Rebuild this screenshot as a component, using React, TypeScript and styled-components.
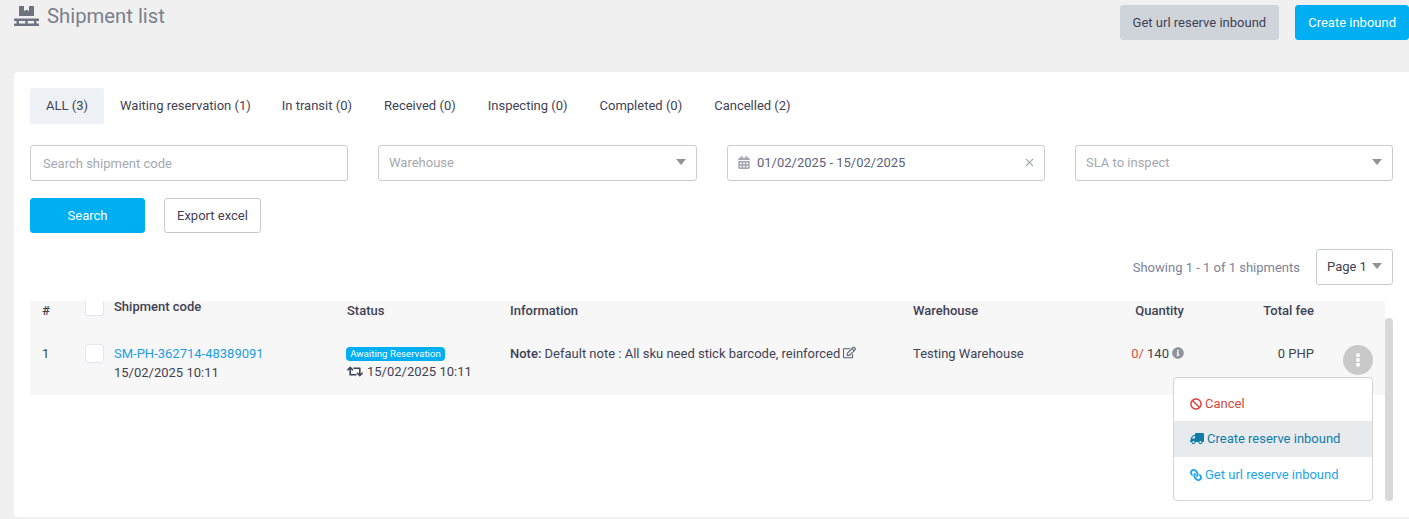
import React from "react"
import styled, { createGlobalStyle } from "styled-components"
import {
  FaBan,
  FaCalendarAlt,
  FaEllipsisV,
  FaInfoCircle,
  FaLink,
  FaPallet,
  FaRegEdit,
  FaRetweet,
  FaTruck,
} from "react-icons/fa"
import { X } from "lucide-react"

const GlobalStyle = createGlobalStyle`
  html, body {
    margin: 0;
    padding: 0;
    background: #f0f0f0;
    overflow: hidden;
  }
  * {
    box-sizing: border-box;
  }
  body {
    font-family: Roboto, "Liberation Sans", sans-serif;
    font-size: 13px;
    color: #3f4254;
  }
`

const Page = styled.div`
  width: 1409px;
  height: 519px;
  padding-left: 14px;
`

const Header = styled.header`
  display: flex;
  justify-content: space-between;
  height: 72px;
  padding-top: 5px;
`

const Title = styled.h1`
  display: flex;
  align-items: flex-start;
  gap: 8px;
  margin: 0;
  font-size: 20.3px;
  font-weight: 400;
  line-height: 22px;
  color: #7b808c;

  svg {
    width: 25px;
    height: 22px;
    color: #6f7380;
  }
`

const HeaderActions = styled.div`
  display: flex;
  gap: 16px;
`

const Button = styled.button<{ $kind: "primary" | "muted" | "outline" }>`
  height: 35px;
  padding: 0 12px;
  border-radius: 3px;
  font-family: inherit;
  font-size: 13px;
  border: 1px solid
    ${p => (p.$kind === "primary" ? "#00aef2" : p.$kind === "muted" ? "#cfd3da" : "#c9c9c9")};
  background: ${p => (p.$kind === "primary" ? "#00aef2" : p.$kind === "muted" ? "#cfd3da" : "#fff")};
  color: ${p => (p.$kind === "primary" ? "#fff" : "#3f4254")};
`

const SearchButton = styled(Button)`
  width: 115px;
`

const Card = styled.main`
  position: relative;
  height: 445px;
  padding: 16px;
  background: #fff;
  border-radius: 4px 0 0 4px;
`

const Tabs = styled.nav`
  display: flex;
  height: 36px;
  margin-bottom: 21px;
`

const Tab = styled.div<{ $active?: boolean }>`
  display: flex;
  align-items: center;
  padding: 0 16px 2px;
  border-radius: 3px;
  background: ${p => (p.$active ? "#eef1f6" : "transparent")};
  color: #3f4254;

  &:nth-child(2) {
    padding-right: 15px;
  }
`

const Filters = styled.div`
  display: grid;
  grid-template-columns: 318px 319px 318px 318px;
  gap: 30px;
  height: 36px;
  margin-bottom: 17px;
`

const Field = styled.div<{ $placeholder?: boolean }>`
  display: flex;
  align-items: center;
  justify-content: space-between;
  padding: 0 10px 2px;
  border: 1px solid #c9ccd2;
  border-radius: 3px;
  background: #fff;
  color: ${p => (p.$placeholder ? "#a5a8b0" : "#5e6278")};
`

const SearchField = styled(Field)`
  padding: 0 12px;
`

const DateValue = styled.span`
  display: flex;
  align-items: center;
  gap: 7px;

  svg {
    color: #a5a8b0;
    width: 12px;
    height: 13px;
  }
`

const Arrow = styled.i`
  width: 0;
  height: 0;
  border-left: 5.5px solid transparent;
  border-right: 5.5px solid transparent;
  border-top: 6px solid #939393;
`

const ClearIcon = styled(X)`
  width: 13px;
  height: 13px;
  color: #a5a8b0;
  margin-right: -2px;
`

const FilterActions = styled.div`
  display: flex;
  gap: 19px;
  height: 35px;
  margin-bottom: 16px;
`

const PagerRow = styled.div`
  display: flex;
  justify-content: flex-end;
  align-items: center;
  gap: 16px;
  height: 36px;
  margin-bottom: 16px;
  color: #7e8299;
`

const PageSelect = styled(Field)`
  width: 77px;
  height: 36px;
  color: #3f4254;
`

const Table = styled.section`
  width: 1355px;
  height: 94px;
  background: #f7f7f7;
`

const Row = styled.div<{ $head?: boolean }>`
  display: grid;
  grid-template-columns: 43px 29px 233px 163px 403px 180px 91px 130px 71px;
  height: ${p => (p.$head ? "34px" : "60px")};
  padding-left: 12px;
  font-weight: ${p => (p.$head ? 500 : 400)};
`

const Cell = styled.div<{ $right?: boolean; $top?: number }>`
  margin-top: ${p => p.$top ?? 0}px;
  line-height: 19px;
  text-align: ${p => (p.$right ? "right" : "left")};
  white-space: nowrap;
`

const Check = styled.span<{ $clip?: boolean }>`
  display: block;
  width: 19px;
  height: ${p => (p.$clip ? "15px" : "19px")};
  background: #fff;
  border: 1px solid #e4e6ef;
  border-top-width: ${p => (p.$clip ? 0 : 1)}px;
  border-radius: ${p => (p.$clip ? "0 0 3px 3px" : "3px")};
`

const CodeLink = styled.a`
  display: block;
  color: #1b9ce5;
`

const Badge = styled.span`
  display: block;
  width: 99px;
  height: 14px;
  margin: 3px 0 0 -1px;
  border-radius: 4px;
  background: #00aef2;
  color: #fff;
  font-size: 9.7px;
  line-height: 14px;
  text-align: center;
`

const StatusDate = styled.span`
  display: flex;
  align-items: center;
  gap: 4px;
  margin-top: 1px;

  svg {
    width: 16px;
    height: 13px;
  }
`

const NoteLabel = styled.b`
  font-weight: 500;
`

const InlineIcon = styled.span`
  margin-left: 3px;
  color: #5e6278;

  svg {
    width: 13px;
    height: 13px;
    vertical-align: -1px;
  }
`

const Received = styled.span`
  color: #e04f44;
`

const InfoIcon = styled(InlineIcon)`
  color: #8f939c;

  svg {
    width: 12px;
    height: 12px;
  }
`

const MenuButton = styled.div`
  display: flex;
  align-items: center;
  justify-content: center;
  width: 30px;
  height: 30px;
  margin: 10px 0 0 29px;
  border-radius: 50%;
  background: #c9c9c9;
  color: #fff;

  svg {
    width: 14px;
    height: 14px;
  }
`

const Scrollbar = styled.div`
  position: absolute;
  left: 1371px;
  top: 246px;
  width: 8px;
  height: 183px;
  border-radius: 4px;
  background: #d8d8d8;
`

const Menu = styled.div`
  position: absolute;
  left: 1159px;
  top: 305px;
  width: 200px;
  height: 124px;
  padding-top: 7px;
  background: #fff;
  border: 1px solid #d4d4d4;
  border-radius: 4px;
`

const MenuItem = styled.div<{ $color: string; $active?: boolean }>`
  display: flex;
  align-items: center;
  gap: 3px;
  height: 36px;
  padding: 0 0 1px 16px;
  background: ${p => (p.$active ? "#e8ebee" : "transparent")};
  color: ${p => p.$color};

  &:first-child {
    padding: 1px 0 0 16px;
  }

  svg {
    width: 12px;
    height: 12px;
  }
`

const FlippedTruck = styled(FaTruck)`
  && {
    width: 14px;
    height: 13px;
  }
  transform: scaleX(-1);
`

const FlippedLink = styled(FaLink)`
  transform: scaleX(-1);
`

const tabs = [
  "ALL (3)",
  "Waiting reservation (1)",
  "In transit (0)",
  "Received (0)",
  "Inspecting (0)",
  "Completed (0)",
  "Cancelled (2)",
]

const App = () => {
  return (
    <Page>
      <GlobalStyle />
      <Header>
        <Title>
          <FaPallet />
          Shipment list
        </Title>
        <HeaderActions>
          <Button $kind="muted">Get url reserve inbound</Button>
          <Button $kind="primary">Create inbound</Button>
        </HeaderActions>
      </Header>

      <Card>
        <Tabs>
          {tabs.map((tab, i) => (
            <Tab key={tab} $active={i === 0}>
              {tab}
            </Tab>
          ))}
        </Tabs>

        <Filters>
          <SearchField $placeholder>Search shipment code</SearchField>
          <Field $placeholder>
            Warehouse
            <Arrow />
          </Field>
          <Field>
            <DateValue>
              <FaCalendarAlt />
              01/02/2025 - 15/02/2025
            </DateValue>
            <ClearIcon />
          </Field>
          <Field $placeholder>
            SLA to inspect
            <Arrow />
          </Field>
        </Filters>

        <FilterActions>
          <SearchButton $kind="primary">Search</SearchButton>
          <Button $kind="outline">Export excel</Button>
        </FilterActions>

        <PagerRow>
          Showing 1 - 1 of 1 shipments
          <PageSelect>
            Page 1
            <Arrow />
          </PageSelect>
        </PagerRow>

        <Table>
          <Row $head>
            <Cell>#</Cell>
            <Cell>
              <Check $clip />
            </Cell>
            <Cell $top={-4}>Shipment code</Cell>
            <Cell>Status</Cell>
            <Cell>Information</Cell>
            <Cell>Warehouse</Cell>
            <Cell $right>Quantity</Cell>
            <Cell $right>Total fee</Cell>
            <Cell />
          </Row>
          <Row>
            <Cell $top={9}>1</Cell>
            <Cell $top={9}>
              <Check />
            </Cell>
            <Cell $top={9}>
              <CodeLink>SM-PH-362714-48389091</CodeLink>
              15/02/2025 10:11
            </Cell>
            <Cell $top={9}>
              <Badge>Awaiting Reservation</Badge>
              <StatusDate>
                <FaRetweet />
                15/02/2025 10:11
              </StatusDate>
            </Cell>
            <Cell $top={9}>
              <NoteLabel>Note:</NoteLabel> Default note : All sku need stick barcode, reinforced
              <InlineIcon>
                <FaRegEdit />
              </InlineIcon>
            </Cell>
            <Cell $top={9}>Testing Warehouse</Cell>
            <Cell $right $top={9}>
              <Received>0/</Received> 140
              <InfoIcon>
                <FaInfoCircle />
              </InfoIcon>
            </Cell>
            <Cell $right $top={9}>
              0 PHP
            </Cell>
            <Cell>
              <MenuButton>
                <FaEllipsisV />
              </MenuButton>
            </Cell>
          </Row>
        </Table>

        <Scrollbar />
        <Menu>
          <MenuItem $color="#d9473c">
            <FaBan />
            Cancel
          </MenuItem>
          <MenuItem $color="#0f7ba8" $active>
            <FlippedTruck />
            Create reserve inbound
          </MenuItem>
          <MenuItem $color="#1ba5ec">
            <FlippedLink />
            Get url reserve inbound
          </MenuItem>
        </Menu>
      </Card>
    </Page>
  )
}

export default App
